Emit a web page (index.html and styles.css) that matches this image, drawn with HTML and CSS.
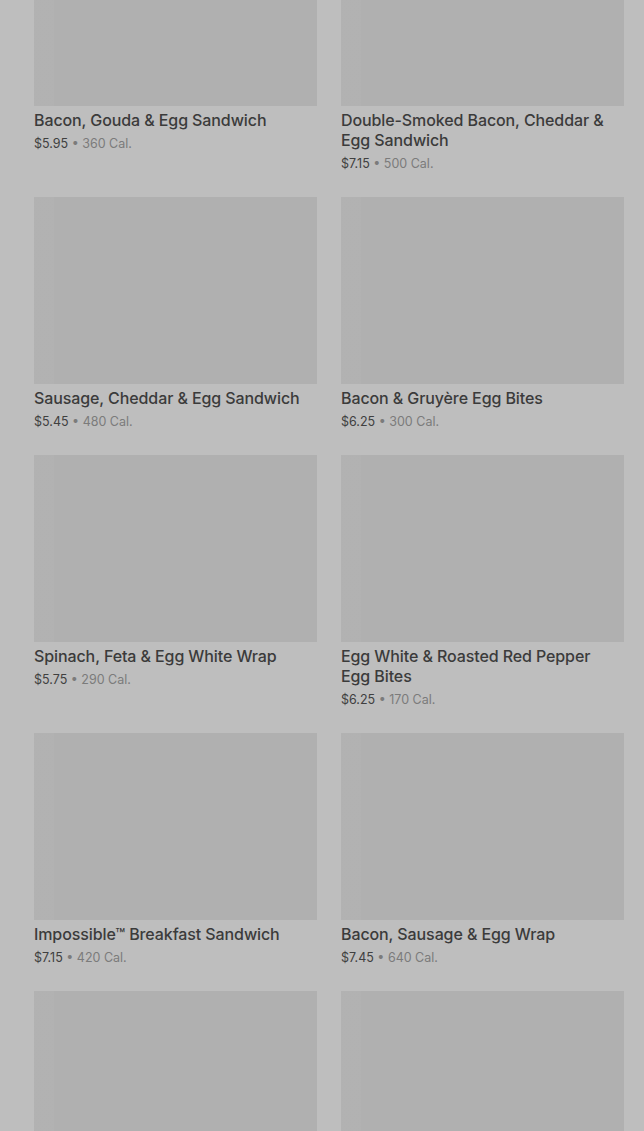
FILE: index.html
```html
<!DOCTYPE html>
<html lang="en">
<head>
    <meta charset="UTF-8">
    <meta name="viewport" content="width=device-width, initial-scale=1.0">
    <title>Hot Breakfast</title>
    <link rel="stylesheet" href="styles.css">
</head>
<body>
    <div class="menu">
        <div class="grid">
            <div class="item">
                <div class="thumb"></div>
                <div class="name">Bacon, Gouda &amp; Egg Sandwich</div>
                <div class="meta"><span class="price">$5.95</span> • 360 Cal.</div>
            </div>
            <div class="item">
                <div class="thumb"></div>
                <div class="name">Double-Smoked Bacon, Cheddar &amp; Egg Sandwich</div>
                <div class="meta"><span class="price">$7.15</span> • 500 Cal.</div>
            </div>
            <div class="item">
                <div class="thumb"></div>
                <div class="name">Sausage, Cheddar &amp; Egg Sandwich</div>
                <div class="meta"><span class="price">$5.45</span> • 480 Cal.</div>
            </div>
            <div class="item">
                <div class="thumb"></div>
                <div class="name">Bacon &amp; Gruyère Egg Bites</div>
                <div class="meta"><span class="price">$6.25</span> • 300 Cal.</div>
            </div>
            <div class="item">
                <div class="thumb"></div>
                <div class="name">Spinach, Feta &amp; Egg White Wrap</div>
                <div class="meta"><span class="price">$5.75</span> • 290 Cal.</div>
            </div>
            <div class="item">
                <div class="thumb"></div>
                <div class="name">Egg White &amp; Roasted Red Pepper Egg Bites</div>
                <div class="meta"><span class="price">$6.25</span> • 170 Cal.</div>
            </div>
            <div class="item">
                <div class="thumb"></div>
                <div class="name">Impossible™ Breakfast Sandwich</div>
                <div class="meta"><span class="price">$7.15</span> • 420 Cal.</div>
            </div>
            <div class="item">
                <div class="thumb"></div>
                <div class="name">Bacon, Sausage &amp; Egg Wrap</div>
                <div class="meta"><span class="price">$7.45</span> • 640 Cal.</div>
            </div>
            <div class="item">
                <div class="thumb"></div>
            </div>
            <div class="item">
                <div class="thumb"></div>
            </div>
        </div>
    </div>
</body>
</html>
```

FILE: styles.css
```css
* {
    margin: 0;
    padding: 0;
    box-sizing: border-box;
}

html, body {
    height: 100%;
    overflow: hidden;
    background: #bebebe;
    font-family: 'Inter', 'Roboto', sans-serif;
    color: #3a3a3a;
}

.menu {
    padding: 0 20px 0 34px;
}

.grid {
    margin-top: -81px;
    display: grid;
    grid-template-columns: 283px 283px;
    column-gap: 24px;
    row-gap: 24px;
}

.thumb {
    height: 187px;
    background:
        linear-gradient(90deg, rgba(255, 255, 255, 0.025) 0, rgba(255, 255, 255, 0.025) 20px, transparent 20px),
        #b0b0b0;
}

.name {
    margin-top: 4px;
    padding-right: 12px;
    font-size: 16px;
    font-weight: 500;
    line-height: 20px;
    color: #3b3b3b;
    letter-spacing: -0.1px;
}

.meta {
    margin-top: 4px;
    font-size: 12.5px;
    line-height: 19px;
    color: #7b7b7b;
}

.price {
    color: #404040;
}
```
